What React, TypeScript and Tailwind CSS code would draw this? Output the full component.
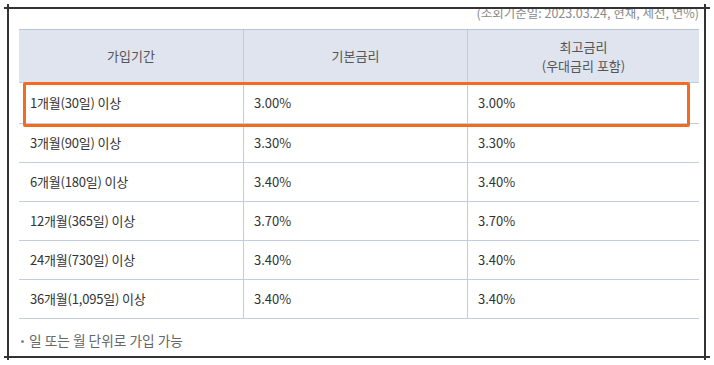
import React from 'react';

const rows = [
    { period: '1개월(30일) 이상', base: '3.00%', max: '3.00%' },
    { period: '3개월(90일) 이상', base: '3.30%', max: '3.30%' },
    { period: '6개월(180일) 이상', base: '3.40%', max: '3.40%' },
    { period: '12개월(365일) 이상', base: '3.70%', max: '3.70%' },
    { period: '24개월(730일) 이상', base: '3.40%', max: '3.40%' },
    { period: '36개월(1,095일) 이상', base: '3.40%', max: '3.40%' },
];

export default function App() {
    return (
        <div
            className="relative w-[714px] h-[365px] overflow-hidden bg-white"
            style={{ fontFamily: '"Noto Sans CJK KR", "Noto Sans", sans-serif' }}
        >
            <div className="pl-[19px] pt-[4px] w-[699px]">
                <p className="text-right text-[12.5px] leading-[18px] text-[#8a8a8a]">
                    (조회기준일: 2023.03.24, 현재, 세전, 연%)
                </p>

                <div className="mt-[7px] w-[680px] border-t border-[#b8c4d8]">
                    <div className="grid grid-cols-[225px_224px_231px] h-[53px] bg-[#dfe4ee] border-b border-[#c3cde0] text-[13px] text-[#555]">
                        <div className="flex items-center justify-center border-r border-[#c3cde0]">가입기간</div>
                        <div className="flex items-center justify-center border-r border-[#c3cde0]">기본금리</div>
                        <div className="flex flex-col items-center justify-center leading-[19px]">
                            <span>최고금리</span>
                            <span>(우대금리 포함)</span>
                        </div>
                    </div>
                    {rows.map((row, i) => (
                        <div
                            key={row.period}
                            className={`grid grid-cols-[225px_224px_231px] border-b border-[#c3cde0] text-[13px] text-[#333] ${
                                i === 0 ? 'h-[41px]' : 'h-[39px]'
                            }`}
                        >
                            <div className="flex items-center pl-[11px] border-r border-[#c3cde0] tracking-[-0.2px]">{row.period}</div>
                            <div className="flex items-center pl-[10px] border-r border-[#c3cde0]">{row.base}</div>
                            <div className="flex items-center pl-[10px]">{row.max}</div>
                        </div>
                    ))}
                </div>

                <p className="mt-[11px] flex items-center gap-[5px] pl-[2px] text-[13.7px] leading-[20px] text-[#666]">
                    <span className="mt-[2px] w-[3px] h-[3px] rounded-full bg-[#888]" />
                    <span>일 또는 월 단위로 가입 가능</span>
                </p>
            </div>

            {/* highlight box */}
            <div className="absolute left-[23px] top-[82px] w-[667px] h-[45px] border-[3px] border-[#f26b22] rounded-[2px]" />

            {/* crop marks */}
            <div className="absolute left-[4px] top-[7px] w-[706px] h-[2px] bg-[#333]" />
            <div className="absolute left-[4px] top-[356px] w-[706px] h-[2px] bg-[#333]" />
            <div className="absolute left-[7px] top-[4px] w-[2px] h-[356px] bg-[#333]" />
            <div className="absolute left-[704px] top-[4px] w-[2px] h-[356px] bg-[#333]" />
        </div>
    );
}
